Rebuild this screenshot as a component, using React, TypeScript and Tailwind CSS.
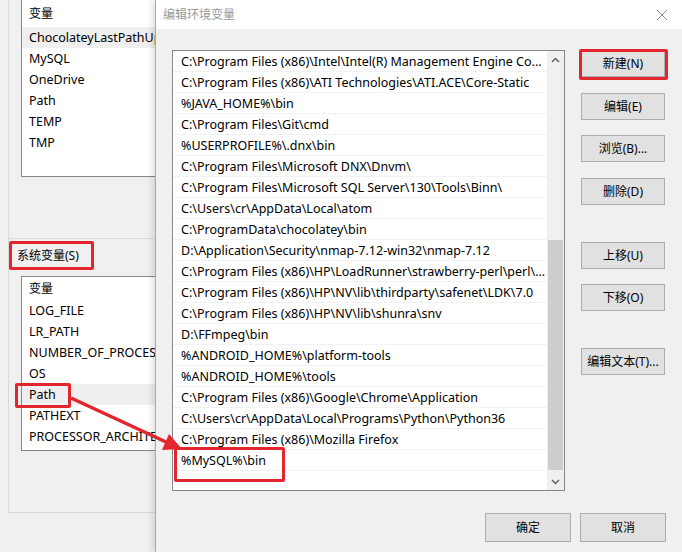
import React from 'react';

const font = "font-['Noto_Sans','Noto_Sans_CJK_SC',sans-serif]";

const userVars = ['ChocolateyLastPathUpdate', 'MySQL', 'OneDrive', 'Path', 'TEMP', 'TMP'];
const sysVars = ['LOG_FILE', 'LR_PATH', 'NUMBER_OF_PROCESSORS', 'OS', 'Path', 'PATHEXT', 'PROCESSOR_ARCHITECTURE'];

const paths = [
    'C:\\Program Files (x86)\\Intel\\Intel(R) Management Engine Co...',
    'C:\\Program Files (x86)\\ATI Technologies\\ATI.ACE\\Core-Static',
    '%JAVA_HOME%\\bin',
    'C:\\Program Files\\Git\\cmd',
    '%USERPROFILE%\\.dnx\\bin',
    'C:\\Program Files\\Microsoft DNX\\Dnvm\\',
    'C:\\Program Files\\Microsoft SQL Server\\130\\Tools\\Binn\\',
    'C:\\Users\\cr\\AppData\\Local\\atom',
    'C:\\ProgramData\\chocolatey\\bin',
    'D:\\Application\\Security\\nmap-7.12-win32\\nmap-7.12',
    'C:\\Program Files (x86)\\HP\\LoadRunner\\strawberry-perl\\perl\\...',
    'C:\\Program Files (x86)\\HP\\NV\\lib\\thirdparty\\safenet\\LDK\\7.0',
    'C:\\Program Files (x86)\\HP\\NV\\lib\\shunra\\snv',
    'D:\\FFmpeg\\bin',
    '%ANDROID_HOME%\\platform-tools',
    '%ANDROID_HOME%\\tools',
    'C:\\Program Files (x86)\\Google\\Chrome\\Application',
    'C:\\Users\\cr\\AppData\\Local\\Programs\\Python\\Python36',
    'C:\\Program Files (x86)\\Mozilla Firefox',
    '%MySQL%\\bin',
    '',
];

const WinButton = ({ label, marked, className = '' }: { label: string; marked?: boolean; className?: string }) => (
    <div className={`relative w-[84px] h-[27px] bg-[#e1e1e1] border border-[#adadad] flex items-center justify-center text-[12px] text-black ${className}`}>
        {label}
        {marked && <span className="absolute -left-[3px] -top-[2px] w-[89px] h-[31px] border-[3px] border-[#e3252d] rounded-[2px]" />}
    </div>
);

const App = () => {
    return (
        <div className={`relative w-[682px] h-[552px] overflow-hidden bg-[#f0f0f0] flex ${font} text-[12px] text-black`}>
            {/* background window: environment variables */}
            <div className="w-[155px] shrink-0 overflow-hidden pl-[8px]">
                <div className="w-[220px] h-[513px] border-l border-b border-[#dadada] flex flex-col">
                    <div className="ml-[12px] -mt-[1px] w-[200px] h-[178px] bg-white border border-[#828790] flex flex-col text-[12.5px]">
                        <div className="h-[27px] shrink-0 flex items-center pl-[7px] pt-[1px] text-[12px]">变量</div>
                        {userVars.map((v, i) => (
                            <div key={v} className={`h-[21px] shrink-0 flex items-center pl-[7px] pt-[1px] whitespace-nowrap ${i === 0 ? 'bg-[#efefef]' : ''}`}>{v}</div>
                        ))}
                    </div>
                    <div className="mt-[61px] border-t border-[#dadada]" />
                    <div className="relative mt-[2px] h-[29px] flex items-center pl-[8px]">
                        系统变量(S)
                        <span className="absolute left-0 top-0 w-[85px] h-[29px] border-[3px] border-[#e3252d] rounded-[2px]" />
                    </div>
                    <div className="ml-[12px] mt-[6px] w-[200px] h-[175px] bg-white border border-[#828790] flex flex-col text-[12.5px]">
                        <div className="h-[23px] shrink-0 flex items-center pl-[7px] pt-[1px] text-[12px]">变量</div>
                        {sysVars.map((v) => (
                            <div key={v} className={`relative h-[21px] shrink-0 flex items-center pl-[7px] pt-[1px] whitespace-nowrap ${v === 'Path' ? 'bg-[#efefef]' : ''}`}>
                                {v}
                                {v === 'Path' && <span className="absolute -left-[7px] -top-[1px] w-[56px] h-[25px] border-[3px] border-[#e3252d] rounded-[2px]" />}
                            </div>
                        ))}
                    </div>
                </div>
            </div>

            {/* dialog */}
            <div className="flex-1 flex flex-col border-l border-[#a9a9a9] shadow-[-3px_0_6px_rgba(0,0,0,0.12)] bg-[#f0f0f0] z-10">
                <div className="h-[29px] shrink-0 bg-white flex items-center justify-between pl-[7px] pr-[12px]">
                    <span className="text-[#9a9a9a]">编辑环境变量</span>
                    <svg width="12" height="12" viewBox="0 0 12 12" className="mr-[2px]">
                        <path d="M1 1 L11 11 M11 1 L1 11" stroke="#8a8a8a" strokeWidth="1" />
                    </svg>
                </div>
                <div className="flex pl-[16px] pt-[21px]">
                    <div className="relative w-[393px] h-[441px] bg-white border border-[#828790] flex">
                        <div className="flex-1 flex flex-col overflow-hidden text-[12.5px]">
                            {paths.map((p, i) => (
                                <div key={i} className="h-[21px] shrink-0 flex items-center pl-[8px] pt-[2px] border-b border-[#f2f2f2] whitespace-nowrap">{p}</div>
                            ))}
                        </div>
                        <div className="w-[17px] shrink-0 bg-[#f0f0f0] flex flex-col">
                            <div className="h-[17px] flex items-center justify-center">
                                <svg width="9" height="6" viewBox="0 0 9 6"><path d="M1 5 L4.5 1.5 L8 5" fill="none" stroke="#606060" strokeWidth="1.5" /></svg>
                            </div>
                            <div className="mt-[172px] h-[230px] mx-[1px] bg-[#cdcdcd]" />
                            <div className="mt-auto h-[17px] flex items-center justify-center">
                                <svg width="9" height="6" viewBox="0 0 9 6"><path d="M1 1 L4.5 4.5 L8 1" fill="none" stroke="#606060" strokeWidth="1.5" /></svg>
                            </div>
                        </div>
                        <span className="absolute left-[1px] top-[396px] w-[111px] h-[35px] border-[3px] border-[#e3252d] rounded-[2px]" />
                    </div>
                    <div className="ml-[16px] flex flex-col">
                        <WinButton label="新建(N)" marked />
                        <WinButton label="编辑(E)" className="mt-[16px]" />
                        <WinButton label="浏览(B)..." className="mt-[15px]" />
                        <WinButton label="删除(D)" className="mt-[16px]" />
                        <WinButton label="上移(U)" className="mt-[37px]" />
                        <WinButton label="下移(O)" className="mt-[15px]" />
                        <WinButton label="编辑文本(T)..." className="mt-[37px]" />
                    </div>
                </div>
                <div className="mt-auto mb-[10px] pr-[16px] flex justify-end gap-[9px]">
                    <WinButton label="确定" className="w-[86px] h-[29px]" />
                    <WinButton label="取消" className="w-[86px] h-[29px]" />
                </div>
            </div>

            {/* annotation arrow */}
            <svg className="absolute left-0 top-0 z-20 pointer-events-none" width="682" height="552">
                <line x1="71" y1="398" x2="166" y2="442" stroke="#e3252d" strokeWidth="3.5" />
                <polygon points="182,449 162,450 169,434" fill="#e3252d" />
            </svg>
        </div>
    );
};

export default App;
